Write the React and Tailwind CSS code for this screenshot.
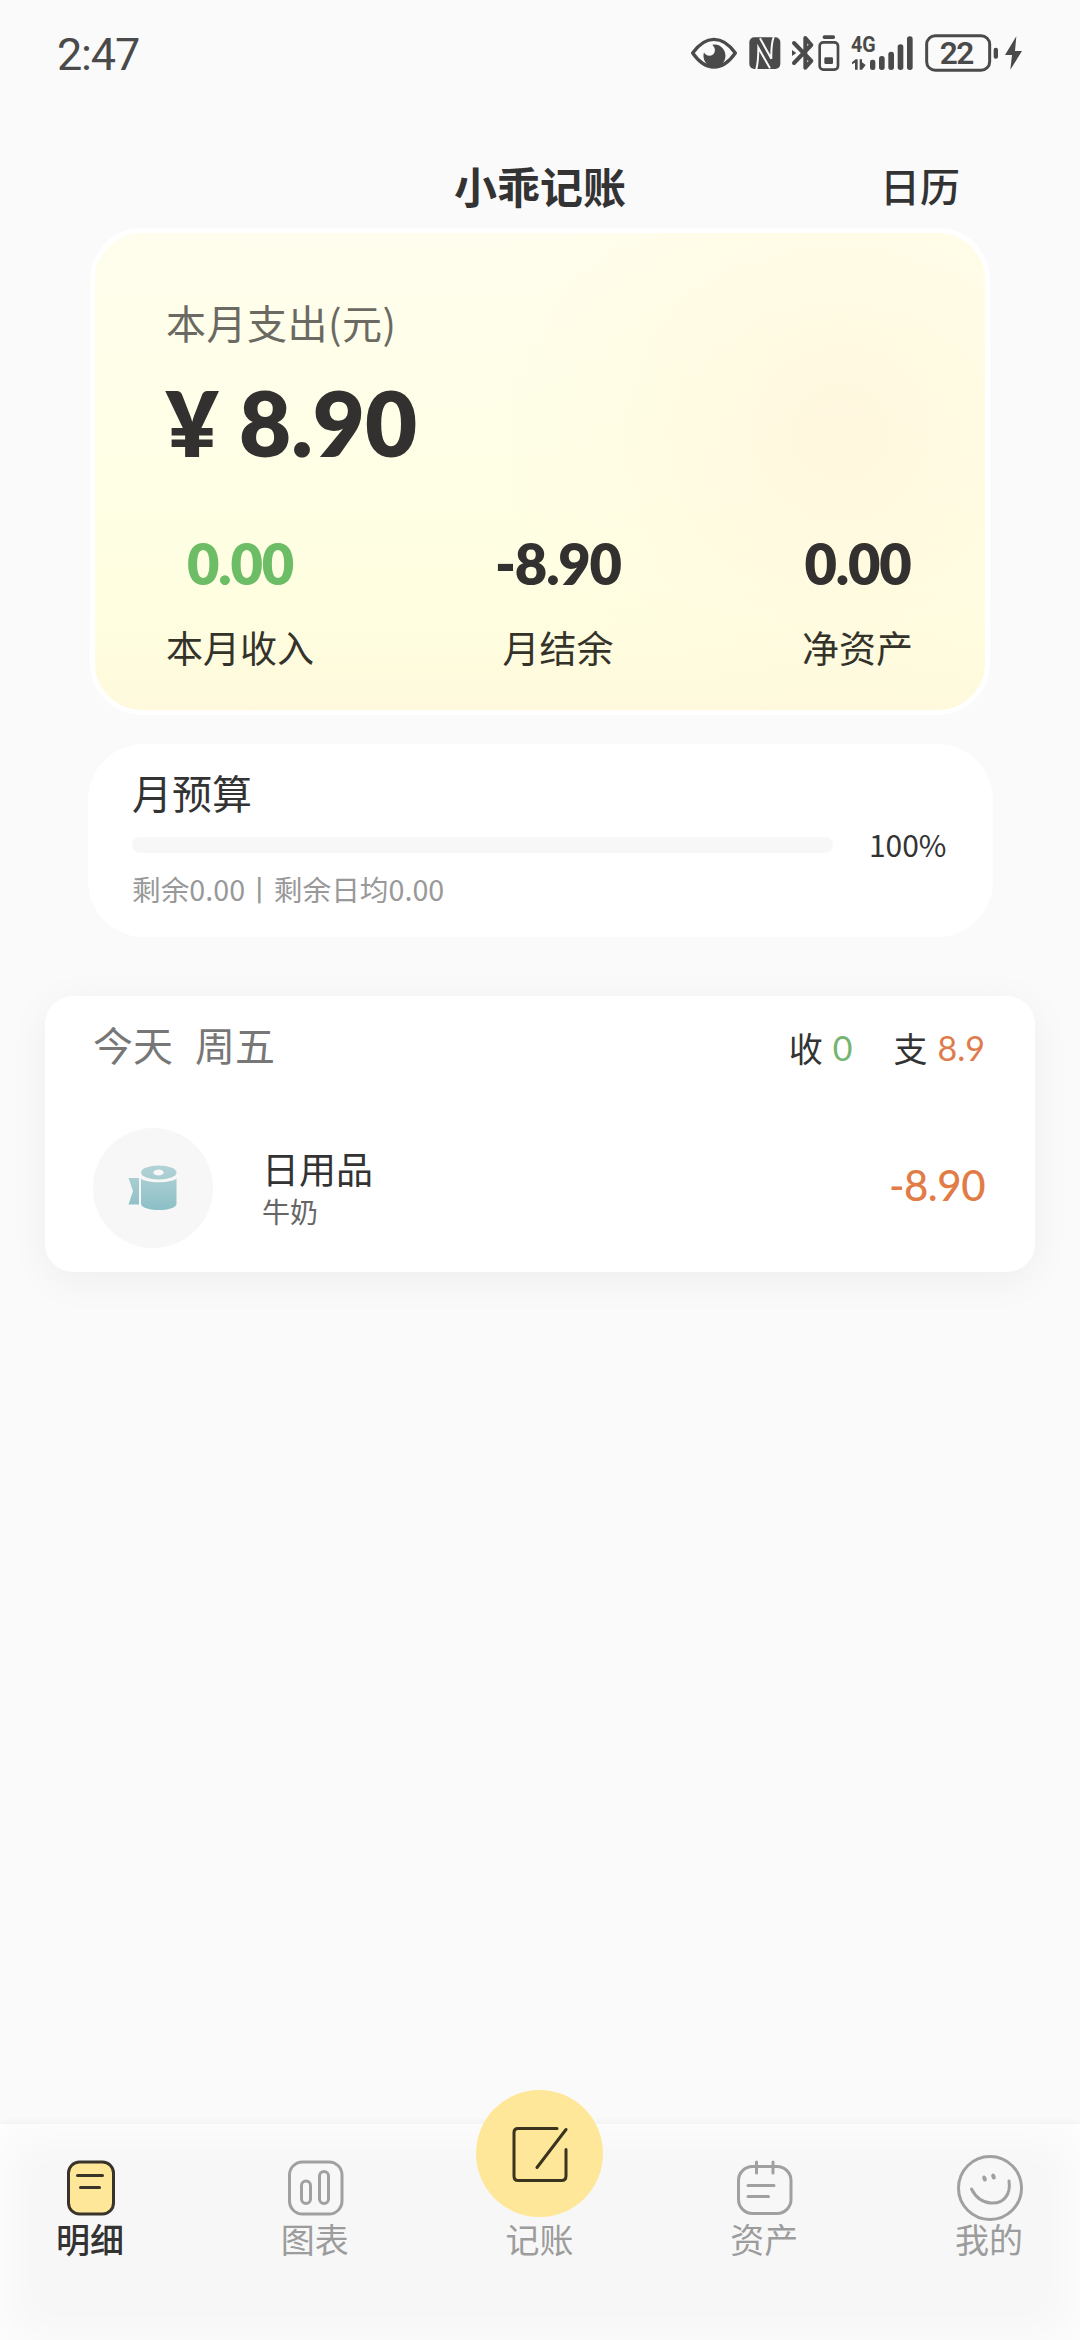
import { useState } from "react";

// --- Data ---
const summary = [
  { label: "本月收入", value: "0.00", color: "text-[#6cbd65]" },
  { label: "月结余", value: "-8.90", color: "text-[#333130]" },
  { label: "净资产", value: "0.00", color: "text-[#333130]" },
];

const records = [{ id: 1, name: "日用品", note: "牛奶", amount: "-8.90" }];

// --- Status bar ---
function StatusBar() {
  return (
    <div className="flex h-[110px] items-start justify-between pr-[55px] pl-[57px] text-[#4a4a4a]">
      <span className="mt-[28px] font-['Roboto',sans-serif] text-[45px] leading-[54px] font-normal tracking-[-1.2px]">2:47</span>
      <div className="mt-[33px] flex h-[40px] fill-current">
        <svg viewBox="30 40 170 120" className="h-[40px] w-[56.67px]">
          <path d="M35 100 Q64 59 99 59 Q134 59 163 100 Q134 142 99 142 Q64 142 35 100 Z" fill="none" stroke="currentColor" strokeWidth="10" strokeLinejoin="round" />
          <path d="M94 75 A33 34 0 1 1 69 98 C74 112 98 112 101 96 C104 87 98 80 94 75 Z" />
        </svg>
        <svg viewBox="200 40 130 120" className="h-[40px] w-[43.33px]">
          <rect x="204" y="53" width="93" height="95" rx="15" />
          <path d="M225 149 Q231 125 231 84 L266 146 M277 52 Q269 75 270 117 L236 56" fill="none" stroke="#fafafa" strokeWidth="6" />
        </svg>
        <svg viewBox="330 40 80 120" className="h-[40px] w-[26.67px]">
          <path d="M339 70 L391 124 L373 144 V55 L391 76 L339 130" fill="none" stroke="currentColor" strokeWidth="12" strokeLinejoin="round" strokeLinecap="round" />
          <path d="M333 91 L346 100 L333 109 Z" />
        </svg>
        <svg viewBox="410 40 100 120" className="h-[40px] w-[33.33px]">
          <rect x="424" y="47" width="37" height="11" rx="5" />
          <rect x="415" y="68" width="55" height="82" rx="11" fill="none" stroke="currentColor" strokeWidth="8" />
          <rect x="429" y="113" width="26" height="20" rx="4" />
        </svg>
        <svg viewBox="510 40 222 120" className="h-[40px] w-[74px]">
          <text x="510" y="98" fontFamily="Roboto, sans-serif" fontSize="65" fontWeight="700" textLength="74" lengthAdjust="spacingAndGlyphs">4G</text>
          <path d="M513 128 L524 119 H530 V150 H522 V129 L513 134 Z M536 119 H543 V128 L554 136 L543 150 H536 Z" />
          <rect x="567" y="120" width="16" height="31" rx="7" />
          <rect x="594" y="109" width="17" height="42" rx="8" />
          <rect x="622" y="96" width="17" height="55" rx="8" />
          <rect x="650" y="74" width="17" height="77" rx="8" />
          <rect x="678" y="50" width="17" height="101" rx="8" />
        </svg>
        <svg viewBox="732 40 300 120" className="h-[40px] w-[100px]">
          <rect x="737" y="48" width="189" height="104" rx="26" fill="none" stroke="currentColor" strokeWidth="9" />
          <text x="776" y="134" fontFamily="Roboto, sans-serif" fontSize="95" fontWeight="600" textLength="104">22</text>
          <rect x="938" y="84" width="13" height="33" rx="6" />
          <path d="M1006 50 L972 106 H993 L988 150 L1023 94 H1002 Z" />
        </svg>
      </div>
    </div>
  );
}

// --- Month summary card ---
function SummaryCard() {
  return (
    <div className="mx-[90px] h-[487px] rounded-[52px] border-5 border-white bg-[radial-gradient(circle_at_745px_200px,rgba(255,246,221,0.85),rgba(255,249,224,0.6)_180px,rgba(255,254,230,0)_340px),linear-gradient(180deg,#fffeee_0%,#ffffe5_55%,#fffee0_80%,#fef9dc_100%)] pt-[65px] pr-[72px] pl-[71px]">
      <div className="text-[40px] leading-[48px] tracking-[0.5px] text-[#6b6a62]">本月支出(元)</div>
      <div className="mt-[26px] font-['Lato',sans-serif] text-[90px] leading-[100px] font-extrabold whitespace-pre text-[#333130] [font-kerning:none]">¥ 8.90</div>
      <div className="mt-[62px] flex justify-between">
        {summary.map((s) => (
          <div key={s.label} className="flex flex-col items-center">
            <span className={`font-['Lato',sans-serif] text-[56px] leading-[60px] font-extrabold tracking-[-1.2px] [font-kerning:none] ${s.color}`}>{s.value}</span>
            <span className="mt-[31px] text-[37px] leading-[44px] text-[#34332a]">{s.label}</span>
          </div>
        ))}
      </div>
    </div>
  );
}

// --- Budget card ---
function BudgetCard() {
  return (
    <div className="mx-[87.5px] mt-[29px] h-[193px] rounded-[56px] bg-white pt-[24px] pr-[46px] pl-[44.5px]">
      <div className="text-[40px] leading-[48px] text-[#333]">月预算</div>
      <div className="mt-[13px] flex h-8 items-center justify-between">
        <div className="h-4 w-[701px] rounded-full bg-[#f7f7f7]" />
        <span className="mb-[3px] text-[30px] leading-8 text-[#333]">100%</span>
      </div>
      <div className="mt-[10px] text-[28.7px] leading-[36px] whitespace-nowrap text-[#999]">剩余0.00丨剩余日均0.00</div>
    </div>
  );
}

function TissueIcon() {
  return (
    <svg viewBox="0 0 50 46" className="h-[46px] w-[50px]">
      <defs>
        <linearGradient id="tissue" gradientUnits="userSpaceOnUse" x1="0" y1="0" x2="0" y2="46">
          <stop offset="0" stopColor="#b3d3d6" />
          <stop offset="1" stopColor="#8bbfc6" />
        </linearGradient>
      </defs>
      <path d="M0.500 13 H11 V39.500 H0.500 L5 26 Z" fill="url(#tissue)" />
      <path d="M13 13.500 C18 18.500 43 18.500 48.500 13.500 V39 C47 47 15 47 13 39 Z" fill="url(#tissue)" />
      <ellipse cx="30.800" cy="7.500" rx="17.700" ry="7" fill="url(#tissue)" />
      <ellipse cx="30.500" cy="7.500" rx="5.200" ry="3" fill="#f7f7f7" />
    </svg>
  );
}

// --- Daily records ---
function DayCard() {
  return (
    <div className="mx-[45px] mt-[59px] h-[276px] rounded-[28px] bg-white pt-[24px] pr-[50px] pl-[48px] shadow-[0_8px_40px_rgba(0,0,0,0.05)]">
      <div className="flex h-[48px] items-center justify-between">
        <div className="flex gap-[22px] text-[40px] leading-[48px] text-[#777]">
          <span>今天</span>
          <span>周五</span>
        </div>
        <div className="mt-[7px] flex items-center text-[34px] leading-[44px] text-[#333]">
          <span>收</span>
          <span className="ml-[10px] font-['Lato',sans-serif] text-[#75b571]">0</span>
          <span className="ml-[41px]">支</span>
          <span className="ml-[10px] font-['Lato',sans-serif] text-[#df7c4b]">8.9</span>
        </div>
      </div>
      {records.map((r) => (
        <div key={r.id} className="mt-[60px] flex h-[120px] items-center">
          <div className="flex size-[120px] items-center justify-center rounded-full bg-[#f7f7f7]">
            <TissueIcon />
          </div>
          <div className="mb-[4px] ml-[49px] flex flex-col">
            <span className="text-[37px] leading-[44px] text-[#333]">{r.name}</span>
            <span className="mt-[5px] text-[28px] leading-[32px] text-[#666]">{r.note}</span>
          </div>
          <span className="mb-[6px] ml-auto font-['Lato',sans-serif] text-[42px] leading-[50px] font-medium tracking-[-0.5px] text-[#e27c46]">{r.amount}</span>
        </div>
      ))}
    </div>
  );
}

// --- Tab icons ---
const icons = {
  list: (
    <svg viewBox="0 0 48 56" className="h-[56px] w-[48px]" fill="none" stroke="#38342a" strokeWidth="3" strokeLinecap="round">
      <rect x="1.500" y="2" width="45" height="52" rx="11" fill="#fee798" />
      <path d="M10.500 15.500 H35.500 M13.500 27.500 H32.500" />
    </svg>
  ),
  chart: (
    <svg viewBox="0 0 56 56" className="h-[56px] w-[56px]" fill="none" stroke="#a0a0a0" strokeWidth="3">
      <rect x="1.500" y="2" width="52.500" height="52" rx="13" />
      <rect x="13.500" y="21" width="9" height="22.500" rx="4.500" />
      <rect x="31.500" y="11.500" width="9" height="32" rx="4.500" />
    </svg>
  ),
  edit: (
    <svg viewBox="0 0 56 56" className="h-[56px] w-[56px]" fill="none" stroke="#3a341f" strokeWidth="3" strokeLinecap="round" strokeLinejoin="round">
      <path d="M45 2.500 H6 Q2 2.500 2 6.500 V50 Q2 54.500 6 54.500 H49.500 Q54 54.500 54 50 V23.500" />
      <path d="M54 3.500 L25 41.500" />
    </svg>
  ),
  wallet: (
    <svg viewBox="0 0 56 56" className="h-[56px] w-[56px]" fill="none" stroke="#a0a0a0" strokeWidth="3" strokeLinecap="round">
      <rect x="1.500" y="6.500" width="52.500" height="47" rx="14" />
      <path d="M19.500 2 V13 M36 2 V13 M11 25.500 H37 M11 36.500 H31.500" />
    </svg>
  ),
  smile: (
    <svg viewBox="0 0 66 66" className="h-[66px] w-[66px]" fill="none" stroke="#a0a0a0" strokeWidth="3" strokeLinecap="round">
      <circle cx="33" cy="33" r="31.500" />
      <path d="M14.500 34 C19 43 26 47.500 34 48 C47 49 54 39 52 26" />
      <ellipse cx="27.500" cy="23.500" rx="1" ry="2" strokeWidth="2.200" transform="rotate(-15 27.500 23.500)" />
      <ellipse cx="36.500" cy="21.500" rx="1" ry="2" strokeWidth="2.200" transform="rotate(-15 36.500 21.500)" />
    </svg>
  ),
};

const tabs = [
  { key: "list", label: "明细" },
  { key: "chart", label: "图表" },
  { key: "edit", label: "记账" },
  { key: "wallet", label: "资产" },
  { key: "smile", label: "我的" },
];

function TabBar({ active, onChange }) {
  return (
    <div className="mt-auto h-[216px] bg-[#f7f7f7] shadow-[0_-2px_6px_rgba(0,0,0,0.04),inset_0_6px_50px_#fff]">
      <div className="flex justify-between pt-[30px] pr-[26px] pl-[25px]">
        {tabs.map((t) => (
          <button key={t.key} onClick={() => onChange(t.key)} className="flex w-[130px] flex-col items-center">
            {t.key === "edit" ? (
              <span className="-mt-[64px] mb-[3px] flex size-[127px] items-center justify-center rounded-full bg-[#fee798]">{icons.edit}</span>
            ) : (
              <span className="mt-px -mb-px ml-[2px] flex h-[66px] items-center">{icons[t.key]}</span>
            )}
            <span
              className={`-mt-[1px] text-[34px] leading-[40px] ${t.key === active ? "font-medium text-[#333]" : "text-[#9c9c9c]"}`}
            >
              {t.label}
            </span>
          </button>
        ))}
      </div>
    </div>
  );
}

// --- Main App ---
export default function App() {
  const [tab, setTab] = useState("list");

  return (
    <div className="flex h-[2340px] w-[1080px] flex-col overflow-hidden bg-[#fafafa] font-['Noto_Sans_CJK_SC',sans-serif]">
      <StatusBar />
      <div className="mt-[45px] mb-[13px] grid h-[60px] grid-cols-3 items-center pr-[120px] pl-[120px]">
        <span />
        <h1 className="text-center text-[43px] leading-[60px] font-bold text-[#333]">小乖记账</h1>
        <span className="text-right text-[40px] leading-[58px] font-medium text-[#333]">日历</span>
      </div>
      <SummaryCard />
      <BudgetCard />
      <DayCard />
      <TabBar active={tab} onChange={setTab} />
    </div>
  );
}
